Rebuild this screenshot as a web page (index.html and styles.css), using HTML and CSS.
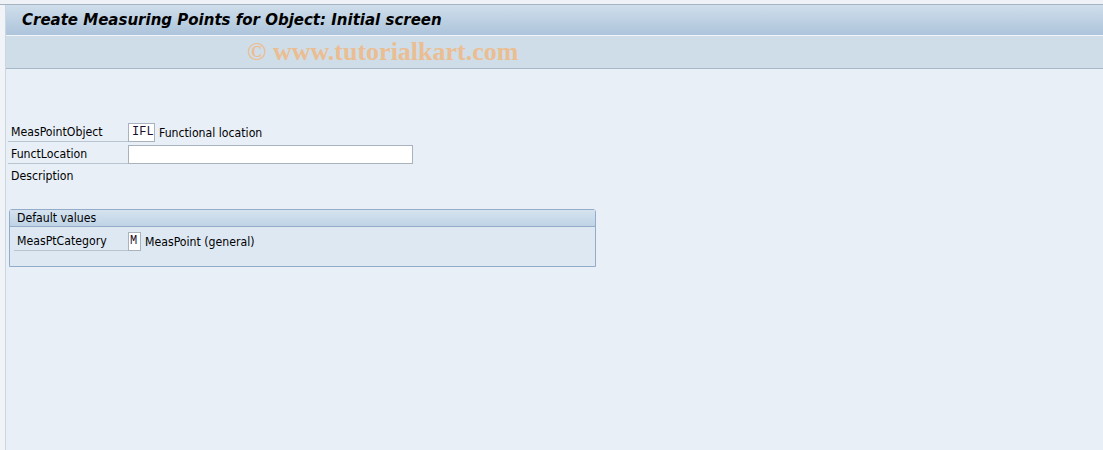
FILE: index.html
```html
<!DOCTYPE html>
<html>
<head>
<meta charset="utf-8">
<link rel="stylesheet" href="styles.css">
</head>
<body>
<div class="frame">
  <div class="topline"></div>
  <div class="window">
    <div class="titlebar"><h1 class="title">Create Measuring Points for Object: Initial screen</h1></div>
    <div class="toolbar"><span class="watermark">© www.tutorialkart.com</span></div>
    <div class="content">
      <div class="form">
        <div class="row">
          <span class="label">MeasPointObject</span>
          <span class="field short">IFL</span>
          <span class="desc">Functional location</span>
        </div>
        <div class="row">
          <span class="label">FunctLocation</span>
          <span class="field long"></span>
        </div>
        <div class="row">
          <span class="label plain">Description</span>
        </div>
      </div>
      <div class="group">
        <div class="group-head">Default values</div>
        <div class="group-body">
          <div class="row">
            <span class="label inner">MeasPtCategory</span>
            <span class="field tiny">M</span>
            <span class="desc">MeasPoint (general)</span>
          </div>
        </div>
      </div>
    </div>
  </div>
</div>
</body>
</html>
```
FILE: styles.css
```css
* { box-sizing: border-box; }
html, body { margin: 0; padding: 0; }
body {
  width: 1103px;
  height: 450px;
  overflow: hidden;
  background: #f0f3f8;
  font-family: "DejaVu Sans Condensed", "Liberation Sans", sans-serif;
  font-size: 12.2px;
  color: #000;
}
.frame { display: flex; flex-direction: column; height: 450px; }
.topline { height: 5px; background: #eef1f5; border-bottom: 1px solid #a6b3c1; flex: none; }
.window {
  flex: 1;
  margin-left: 5px;
  border-left: 1px solid #cdd5de;
  display: flex;
  flex-direction: column;
}
.titlebar {
  height: 31px;
  background: linear-gradient(#cfdeeb, #adc4db);
  border-bottom: 1px solid #f2f6fa;
  display: flex;
  align-items: center;
  padding-left: 16px;
}
.title {
  margin: 0;
  font-family: "DejaVu Sans", sans-serif;
  font-weight: bold;
  font-style: italic;
  font-size: 15px;
  color: #000;
}
.toolbar {
  height: 33px;
  background: #cfdde8;
  border-bottom: 1px solid #a8b8c9;
  display: flex;
  align-items: center;
  padding-left: 241px;
}
.watermark {
  font-family: "Liberation Serif", serif;
  font-weight: bold;
  font-size: 26px;
  color: #ebbd92;
}
.content {
  flex: 1;
  background: #e8eff7;
  padding: 54px 0 0 2px;
}
.form { display: flex; flex-direction: column; gap: 3px; }
.row { display: flex; align-items: center; height: 19px; }
.label {
  width: 120px;
  height: 19px;
  line-height: 19px;
  padding-left: 3px;
  border-bottom: 1px solid #b8c4d0;
  flex: none;
}
.label.plain { border-bottom: none; }
.field {
  height: 19px;
  background: #fff;
  border: 1px solid #a9b3bd;
  font-family: "Liberation Mono", monospace;
  font-size: 12px;
  line-height: 17px;
  padding-left: 3px;
  color: #1a1030;
}
.field.short { width: 27px; }
.field.long { width: 285px; }
.field.tiny { width: 13px; padding-left: 1px; }
.desc { margin-left: 4px; }
.group {
  margin: 23px 0 0 1px;
  width: 587px;
  border: 1px solid #92acc9;
  border-radius: 3px 3px 0 0;
  background: #dde8f3;
}
.group-head {
  height: 17px;
  line-height: 16px;
  padding-left: 7px;
  background: linear-gradient(#d6e3ef, #bfd3e6);
  border-bottom: 1px solid #92acc9;
}
.group-body { padding: 5px 0 0 4px; height: 39px; }
.label.inner { width: 114px; }
```
